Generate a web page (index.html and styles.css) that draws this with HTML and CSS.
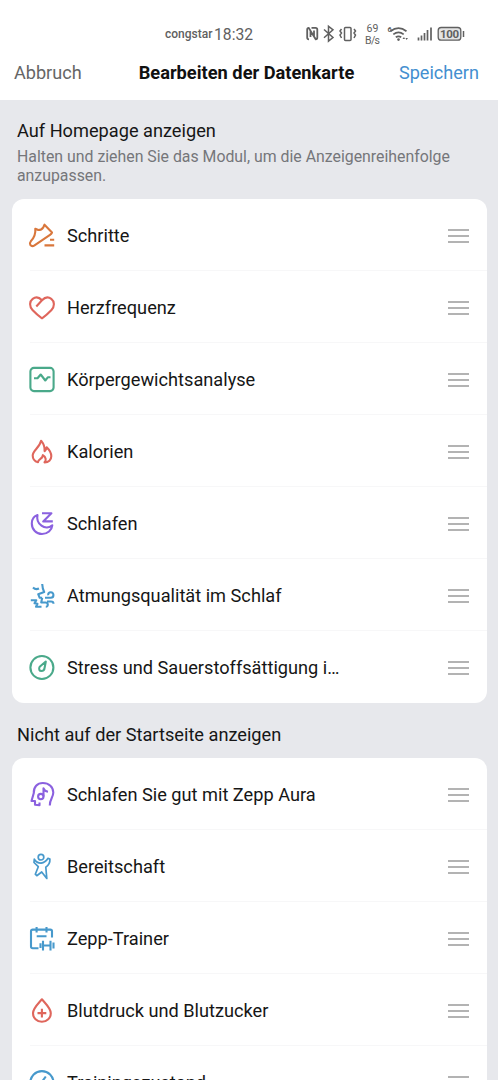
FILE: index.html
```
<!DOCTYPE html>
<html lang="de">
<head>
<meta charset="utf-8">
<title>Bearbeiten der Datenkarte</title>
<link rel="stylesheet" href="styles.css">
</head>
<body>
<header class="top">
  <div class="status">
    <span class="carrier">congstar</span><span class="clock">18:32</span>
    <svg class="status-icons" viewBox="0 0 170 30" width="170" height="30">
      <g fill="none" stroke="#606060" stroke-width="1.5">
        <path d="M9 20.300q-1.800 0-1.800-1.800v-8q0-1.700 1.500-1.700L14 17.500V11.500M11.500 8.800h4q1.800 0 1.800 1.800v8q0 1.700-1.500 1.700L10.500 12v6" stroke-width="1.800"/>
        <path d="M24 10.500l9 8-4.500 3.700V7.200l4.500 3.600-9 8"/>
        <rect x="44.500" y="8.500" width="6.500" height="13" rx="1"/>
        <path d="M41.500 10l-1.500 2 1.500 2-1.500 2 1.500 3M54 10l1.500 2-1.500 2 1.500 2-1.500 3"/>
        <path d="M90.500 12.200q8-6 16 0M93.300 15.300q5.200-4 10.400 0M95.800 18.300q2.700-2 5.400 0" stroke-width="1.700"/>
        <path d="M118.500 18.500v3M121.500 16.500v5M124.500 14v7.500M127.500 11v10.500M131 8.500v13" stroke-width="1.700"/>
        <rect x="138.200" y="8.500" width="22.600" height="12.700" rx="3" stroke-width="1.300" fill="#e4e4e4"/>
        <path d="M163.500 12v6"/>
      </g>
      <g fill="#606060">
        <circle cx="98.500" cy="20.600" r="1.300"/>
        <path d="M102.500 20l1.500-2 1 2zM105.500 19l1 2 1.500-2z"/>
        <text x="72.500" y="12.700" text-anchor="middle" font-size="10.500">69</text>
        <text x="72.500" y="25" text-anchor="middle" font-size="10.500" textLength="15">B/s</text>
        <text x="87.500" y="12.500" font-size="7.500" font-weight="700">6</text>
        <text x="149.500" y="18.900" text-anchor="middle" font-size="11.500" font-weight="700" textLength="19">100</text>
      </g>
    </svg>
  </div>
  <nav class="bar">
    <span class="cancel">Abbruch</span>
    <h1 class="title">Bearbeiten der Datenkarte</h1>
    <span class="save">Speichern</span>
  </nav>
</header>
<main>
  <section class="intro">
    <h2 class="heading">Auf Homepage anzeigen</h2>
    <p class="hint">Halten und ziehen Sie das Modul, um die Anzeigenreihenfolge anzupassen.</p>
  </section>
  <ul class="card">
    <li class="row">
      <svg class="icon orange" viewBox="0 0 28 28"><path d="M7.300 6.700L10.300 8q3.200 0 5-2.700l1.200-2.600 7.500 7.800q-.5 1.300-2 2.300L6.500 23.300q-2.500 1.700-4.200-.4-1-1.800.5-3.600Q8 14 7.300 6.700zM22 17.700h4.200M16.500 23.400h9.700"/></svg>
      <span class="label">Schritte</span><span class="grip"></span>
    </li>
    <li class="row">
      <svg class="icon red" viewBox="0 0 28 28"><path d="M14 24.300Q9 20.800 4.500 16C1 12.300 1.600 7.200 4.700 4.800 8 2.300 11.500 3.500 14 6.300 16.500 3.500 20 2.300 23.300 4.800 26.400 7.200 27 12.300 23.500 16Q19 20.800 14 24.300zM14 6.300L8.300 12.500"/></svg>
      <span class="label">Herzfrequenz</span><span class="grip"></span>
    </li>
    <li class="row">
      <svg class="icon green" viewBox="0 0 28 28"><rect x="2.400" y="1.900" width="23.200" height="23.200" rx="3.500"/><path d="M6 12.300h3.500l3.200-3.800 4.600 6 2.700-3.300h2.500"/></svg>
      <span class="label">Körpergewichtsanalyse</span><span class="grip"></span>
    </li>
    <li class="row">
      <svg class="icon red" viewBox="0 0 28 28"><path d="M10 24.300C6.500 23.300 4.700 20.500 4.700 17.500 4.700 12.300 11.500 10 13.100 2.700 15.800 6 17 9 16.600 13.200Q18.300 11.500 18.700 9.300C21.500 12 23.300 14.600 23.300 18.200 23.300 21.800 20.500 24.500 16.500 24.400 18.600 22.500 18 19 14.800 17.200 15 21 10 20.500 10 24.300z"/></svg>
      <span class="label">Kalorien</span><span class="grip"></span>
    </li>
    <li class="row">
      <svg class="icon purple" viewBox="0 0 28 28"><path d="M9.500 5C6 6.200 3.800 9.500 3.800 13.400 3.800 19.400 8.300 24 14 24 19.500 24 23.800 20.300 24.300 15.300 21.500 17.700 17 18.300 13.500 15.700 9.800 13 8.700 8.700 9.500 5zM14 3.200h9.400l-8.200 8.200h9.600"/></svg>
      <span class="label">Schlafen</span><span class="grip"></span>
    </li>
    <li class="row">
      <svg class="icon blue" viewBox="0 0 28 28"><path d="M14.200 2q.3 5 2 8l-6 2.200 1.500 3.600h2.500M5 5.500q2.500 2.500 6 1M2.800 18.300h5.500l-1.800 3 3 .5-1.500 2.900h5.500M17 15.800h5.800c3.500 0 3.500-5.600 0-5.600-2 0-2.900 1.300-2.500 3M14.200 15.800l-1 4.700h4.300c3 0 3 4.300.3 4.300M19 19.500h4q2.500 0 2.500 2.300"/></svg>
      <span class="label">Atmungsqualität im Schlaf</span><span class="grip"></span>
    </li>
    <li class="row">
      <svg class="icon green" viewBox="0 0 28 28"><circle cx="13.900" cy="13.500" r="11.500"/><path d="M17.800 7.500L11.700 12.700C10.300 15 11.500 17 13.300 17 15.300 17 16.500 15.500 16.600 13.700z"/></svg>
      <span class="label">Stress und Sauerstoffsättigung i…</span><span class="grip"></span>
    </li>
  </ul>
  <h2 class="heading second">Nicht auf der Startseite anzeigen</h2>
  <ul class="card">
    <li class="row">
      <svg class="icon purple" viewBox="0 0 28 28"><path d="M11.500 21.500V24.300L7 23.800V20H3.500L5.800 12C5.500 6 9.300 2 14.800 2 21 2 25.300 6 25.300 11.600 25.300 16.500 21.500 18.500 21.800 24.500"/><circle cx="12.800" cy="15.600" r="2.700"/><path d="M15.500 15.600V7.200q.8 3 4.500 3.500"/></svg>
      <span class="label">Schlafen Sie gut mit Zepp Aura</span><span class="grip"></span>
    </li>
    <li class="row">
      <svg class="icon blue thin" viewBox="0 0 28 28"><circle cx="13" cy="4.200" r="2.800"/><path d="M6.300 6.200Q8.500 10 13 10.200 17.500 9.500 20 5.300l1.900.8Q22.300 11 17.800 14.200L18.800 25.500 13.700 19 8.800 22.700 7.300 21.200 10.300 13.700 6 9.500z"/></svg>
      <span class="label">Bereitschaft</span><span class="grip"></span>
    </li>
    <li class="row">
      <svg class="icon blue" viewBox="0 0 28 28"><path d="M10.500 23.200H4.700q-1.700 0-1.700-1.700V6.300q0-1.700 1.700-1.700h17.600q1.700 0 1.700 1.700V12.500M8.600 2v5.500M18.500 2v5.500M8.700 11.300h9.800M15 15.700v9.800M22.500 15.700v9.800M15 20.500h7.500M12.500 18.200v4.700M25.500 17.500v6"/></svg>
      <span class="label">Zepp-Trainer</span><span class="grip"></span>
    </li>
    <li class="row">
      <svg class="icon red" viewBox="0 0 28 28"><path d="M13.900 2.300C9.500 7.500 5 11.300 5 16.200 5 21 8.800 24.800 13.900 24.800S22.800 21 22.800 16.200C22.800 11.300 18.300 7.500 13.900 2.300zM13.900 11.700v8.800M9.500 16.100h8.800"/></svg>
      <span class="label">Blutdruck und Blutzucker</span><span class="grip"></span>
    </li>
    <li class="row">
      <svg class="icon blue" viewBox="0 0 28 28"><circle cx="13.900" cy="13.700" r="11.600"/><path d="M17.800 7.500L13 14"/></svg>
      <span class="label">Trainingszustand</span><span class="grip"></span>
    </li>
  </ul>
</main>
</body>
</html>
```
FILE: styles.css
```
* { box-sizing: border-box; }
body {
  margin: 0;
  height: 1080px;
  overflow: hidden;
  background: #e7e8ec;
  color: #161616;
  font-family: Roboto, "Liberation Sans", sans-serif;
}
.top { height: 100px; padding-top: 19px; background: #fff; }
.status {
  display: flex;
  height: 30px;
  padding-left: 165px;
  align-items: center;
  color: #606060;
}
.carrier { width: 49px; font-size: 12px; font-weight: 500; }
.clock { width: 86px; font-size: 15.700px; }
.status-icons { flex: none; font-family: Roboto, sans-serif; }
.bar {
  display: flex;
  justify-content: space-between;
  align-items: center;
  height: 46px;
  padding: 0 19px 0 14px;
  font-size: 18.100px;
}
.cancel { color: #666; width: 80px; }
.title { margin: 0; font-size: 18.250px; font-weight: 700; color: #111; }
.save { color: #438fd0; }
.intro { height: 99px; padding: 20px 17px 0; }
.heading { margin: 0; font-size: 18.200px; line-height: 21px; font-weight: 400; }
.hint { margin: 7px 0 0; font-size: 15.850px; line-height: 18.500px; color: #75767a; }
.second { padding: 21px 17px 0; height: 55px; }
.card {
  margin: 0 11px 0 11.500px;
  padding: 0;
  list-style: none;
  background: #fff;
  border-radius: 12px;
}
.row {
  display: flex;
  align-items: center;
  height: 72px;
  padding: 2px 18px 0 16.500px;
  background: linear-gradient(#f7f7f8, #f7f7f8) 18px 100% / 100% 1px no-repeat;
}
.row:last-child { background: none; }
.icon {
  width: 28px;
  height: 28px;
  flex: none;
  fill: none;
  stroke: currentColor;
  stroke-width: 2.100;
  stroke-linejoin: round;
}
.thin { stroke-width: 1.700; }
.label { flex: 1; margin-left: 11px; font-size: 18.200px; line-height: 24px; }
.grip {
  width: 21px;
  height: 14px;
  margin-top: -1px;
  border-top: 2px solid #b3b3b3;
  border-bottom: 2px solid #b3b3b3;
  background: linear-gradient(#b3b3b3, #b3b3b3) 0 4px / 100% 2px no-repeat;
}
.orange { color: #d9773c; }
.red { color: #df665c; }
.green { color: #4aa98a; }
.purple { color: #8b61df; }
.blue { color: #4799cc; }
```
